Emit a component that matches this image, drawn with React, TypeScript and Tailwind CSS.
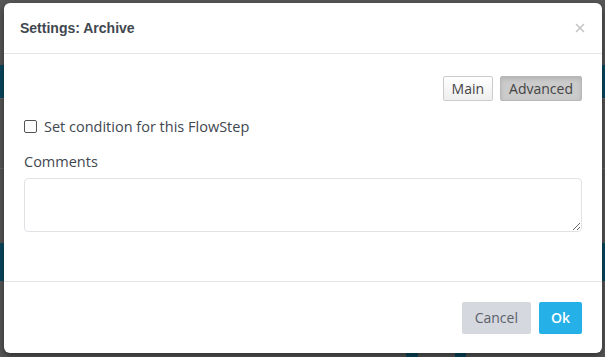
import { IoClose } from "react-icons/io5";

const App = () => {
  return (
    <div className="relative w-[605px] h-[357px] overflow-hidden bg-[#585858]" style={{ fontFamily: '"Open Sans", sans-serif' }}>
      {/* things behind the overlay */}
      <div className="absolute left-0 top-[65px] w-[605px] h-[33px] bg-[#0b4a63]" />
      <div className="absolute left-0 top-[98px] w-[605px] h-px bg-[#6a6a6a]" />
      <div className="absolute left-0 top-[168px] w-[605px] h-px bg-[#6a6a6a]" />
      <div className="absolute left-0 top-[243px] w-[605px] h-[38px] bg-[#0b4a63]" />
      <div className="absolute left-[406px] top-[340px] w-[12px] h-[20px] bg-[#0b4a63]" />
      <div className="absolute left-[455px] top-[340px] w-[11px] h-[20px] bg-[#0b4a63]" />

      <div className="relative flex flex-col mt-[3px] ml-[4px] w-[598px] h-[350px] bg-white rounded-[6px] shadow-[0_3px_9px_rgba(0,0,0,0.5)]">
        <div className="flex items-center justify-between h-[51px] pl-[16px] pr-[14px] border-b border-[#e5e5e5]">
          <h4 className="text-[14px] font-bold text-[#3f4750]" style={{ fontFamily: '"Liberation Sans", Arial, sans-serif' }}>
            Settings: Archive
          </h4>
          <button className="text-[#c4c4c4]">
            <IoClose size={16} />
          </button>
        </div>

        <div className="flex flex-col flex-1 px-[20px] pt-[22px]">
          <div className="flex justify-end">
            <button className="h-[25px] px-[8px] text-[14px] text-[#444] border border-[#ccc] rounded-[2px] bg-gradient-to-b from-white to-[#eee]">
              Main
            </button>
            <button className="ml-[7px] h-[25px] px-[8px] text-[14px] text-[#444] border border-[#b8b8b8] rounded-[2px] bg-[#cbcbcb] shadow-[inset_0_2px_4px_rgba(0,0,0,0.12)]">
              Advanced
            </button>
          </div>

          <label className="flex items-center mt-[15px] text-[14.5px] text-[#3f4750]">
            <span className="w-[13px] h-[13px] border border-[#555] rounded-[2px] bg-white" />
            <span className="ml-[7px]">Set condition for this FlowStep</span>
          </label>

          <div className="mt-[13px] text-[14.5px] text-[#3f4750]">Comments</div>
          <textarea className="mt-[5px] h-[54px] w-full border border-[#e2e2e6] rounded-[4px] resize-y outline-none" />
        </div>

        <div className="flex justify-end items-center h-[72px] px-[20px] border-t border-[#e5e5e5]">
          <button className="h-[32px] px-[13px] text-[14px] text-[#5b6168] bg-[#d5d8df] rounded-[2px]">
            Cancel
          </button>
          <button className="ml-[8px] h-[32px] px-[12px] text-[14px] font-semibold text-white bg-[#26b0e8] rounded-[2px]">
            Ok
          </button>
        </div>
      </div>
    </div>
  );
};

export default App;
